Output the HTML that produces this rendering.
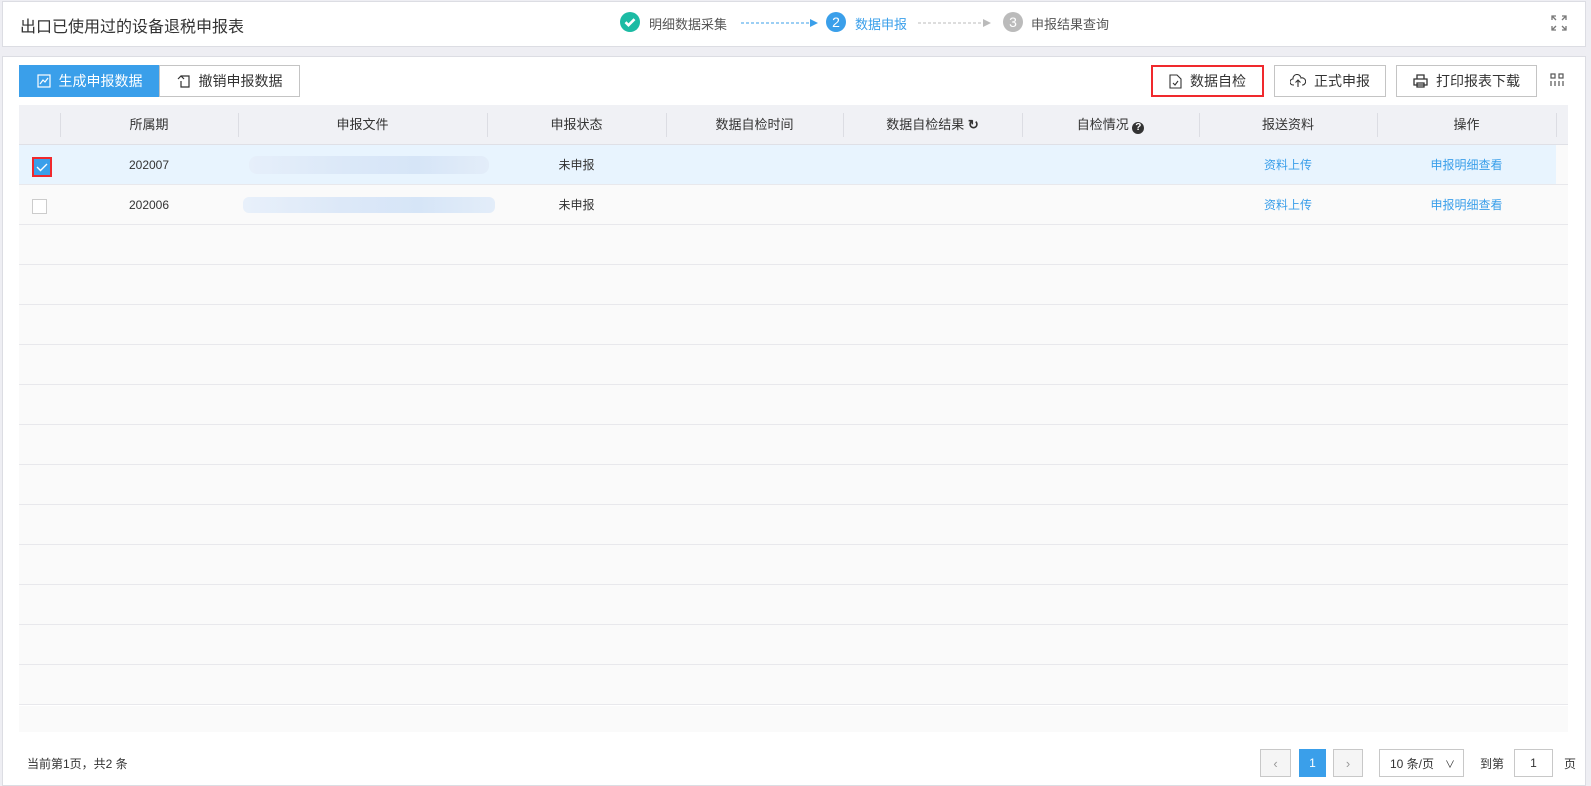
<!DOCTYPE html>
<html><head><meta charset="utf-8"><style>
*{box-sizing:border-box;margin:0;padding:0}
body{width:1591px;height:781px;background:#eeeef3;font-family:"Liberation Sans","Noto Sans CJK SC",sans-serif;color:#333;position:relative;overflow:hidden;font-size:13px}
.a{position:absolute}
.card{position:absolute;background:#fff;border:1px solid #dcdde3}
.btn{position:absolute;height:32px;border:1px solid #c4c4c4;background:#fff;font-size:14px;display:flex;align-items:center;justify-content:center;gap:8px;color:#333}
.th{position:absolute;top:105px;height:40px;line-height:40px;text-align:center;font-size:13px;color:#333}
.sep{position:absolute;top:113px;width:1px;height:24px;background:#dcdde3}
.row{position:absolute;left:19px;width:1549px;height:40px;border-bottom:1px solid #e8e8ec;background:#fafafa}
.c{position:absolute;line-height:40px;text-align:center;font-size:12px}
.lnk{color:#3a9fea}
.pg{position:absolute;top:749px;height:28px;border:1px solid #c8c8c8;background:#f5f5f5;display:flex;align-items:center;justify-content:center;color:#999;font-size:13px}
</style></head><body>
<div class="card" style="left:2px;top:1px;width:1584px;height:46px"></div>
<div class="a" style="left:20px;top:13px;font-size:16px;color:#333">出口已使用过的设备退税申报表</div>
<!-- steps -->
<svg class="a" style="left:620px;top:12px" width="20" height="20"><circle cx="10" cy="10" r="10" fill="#1cbba4"/><path d="M5.5 10.2l3 3 6-6" stroke="#fff" stroke-width="2.6" fill="none"/></svg>
<div class="a" style="left:649px;top:14px;font-size:13px;color:#555">明细数据采集</div>
<svg class="a" style="left:740px;top:18px" width="80" height="10"><line x1="1" y1="5" x2="70" y2="5" stroke="#3a9fea" stroke-dasharray="3,2"/><path d="M70 1l8 4-8 4z" fill="#3a9fea"/></svg>
<div class="a" style="left:826px;top:12px;width:20px;height:20px;border-radius:50%;background:#3a9fea;color:#fff;text-align:center;line-height:20px;font-size:14px">2</div>
<div class="a" style="left:855px;top:14px;font-size:13px;color:#3a9fea">数据申报</div>
<svg class="a" style="left:917px;top:18px" width="80" height="10"><line x1="1" y1="5" x2="66" y2="5" stroke="#bbb" stroke-dasharray="3,2"/><path d="M66 1l8 4-8 4z" fill="#bbb"/></svg>
<div class="a" style="left:1003px;top:12px;width:20px;height:20px;border-radius:50%;background:#bbb;color:#fff;text-align:center;line-height:20px;font-size:14px">3</div>
<div class="a" style="left:1031px;top:14px;font-size:13px;color:#555">申报结果查询</div>
<svg class="a" style="left:1550px;top:14px" width="18" height="18" fill="none" stroke="#777" stroke-width="1.3"><path d="M2 6V2h4M2 2l4 4M16 6V2h-4M16 2l-4 4M2 12v4h4M2 16l4-4M16 12v4h-4M16 16l-4-4"/></svg>

<div class="card" style="left:2px;top:56px;width:1584px;height:730px"></div>
<!-- left buttons -->
<div class="btn" style="left:19px;top:65px;width:141px;background:#3a9fea;border-color:#3a9fea;color:#fff"><svg width="14" height="14" fill="none" stroke="#fff" stroke-width="1.2"><rect x="1" y="1" width="12" height="12"/><path d="M3 10l3-4 2 2 3-4"/></svg>生成申报数据</div>
<div class="btn" style="left:159px;top:65px;width:141px"><svg width="14" height="14" fill="none" stroke="#333" stroke-width="1.2"><path d="M4 2h8v11H4V7M1 5l3-3 3 3"/></svg>撤销申报数据</div>
<!-- right buttons -->
<div class="btn" style="left:1151px;top:65px;width:113px;border:2px solid #f0292d"><svg width="13" height="15" fill="none" stroke="#333" stroke-width="1.1"><path d="M1 1h7l4 4v9H1z"/><path d="M4 9l2 2 3-4"/></svg>数据自检</div>
<div class="btn" style="left:1274px;top:65px;width:112px"><svg width="16" height="14" fill="none" stroke="#333" stroke-width="1.1"><path d="M4 11H3a3 3 0 010-6 4 4 0 018-1 3 3 0 012 7h-1M8 13V6M5.5 8.5L8 6l2.5 2.5"/></svg>正式申报</div>
<div class="btn" style="left:1396px;top:65px;width:141px"><svg width="15" height="14" fill="none" stroke="#333" stroke-width="1.3"><path d="M4 5V1h7v4M1 5h13v6H1zM4 9h7v4H4z"/></svg>打印报表下载</div>
<svg class="a" style="left:1550px;top:73px" width="14" height="14" fill="none" stroke="#555" stroke-width="1.2"><rect x="1" y="1" width="4" height="4"/><rect x="9" y="1" width="4" height="4"/><path d="M1 8v5M5 8v5M9 8v5M13 8v5"/></svg>

<!-- table -->
<div class="a" style="left:19px;top:105px;width:1549px;height:40px;background:#f0f1f5;border-bottom:1px solid #dfe0e6"></div>
<div class="sep" style="left:60px"></div><div class="sep" style="left:238px"></div><div class="sep" style="left:487px"></div><div class="sep" style="left:666px"></div><div class="sep" style="left:843px"></div><div class="sep" style="left:1022px"></div><div class="sep" style="left:1199px"></div><div class="sep" style="left:1377px"></div><div class="sep" style="left:1556px"></div>
<div class="th" style="left:60px;width:178px">所属期</div>
<div class="th" style="left:238px;width:249px">申报文件</div>
<div class="th" style="left:487px;width:179px">申报状态</div>
<div class="th" style="left:666px;width:177px">数据自检时间</div>
<div class="th" style="left:843px;width:179px">数据自检结果 <span style="font-weight:bold">&#x21BB;</span></div>
<div class="th" style="left:1022px;width:177px">自检情况 <span style="display:inline-block;width:12px;height:12px;border-radius:50%;background:#333;color:#fff;font-size:10px;line-height:12px;font-weight:bold;vertical-align:-1px">?</span></div>
<div class="th" style="left:1199px;width:178px">报送资料</div>
<div class="th" style="left:1377px;width:179px">操作</div>

<div class="row" style="top:145px;background:#fafafa"><div class="a" style="left:0;top:0;width:1537px;height:39px;background:#e8f4fe"></div></div>
<div class="row" style="top:185px"></div>
<div class="row" style="top:225px"></div><div class="row" style="top:265px"></div><div class="row" style="top:305px"></div><div class="row" style="top:345px"></div><div class="row" style="top:385px"></div><div class="row" style="top:425px"></div><div class="row" style="top:465px"></div><div class="row" style="top:505px"></div><div class="row" style="top:545px"></div><div class="row" style="top:585px"></div><div class="row" style="top:625px"></div><div class="row" style="top:665px"></div>
<div class="a" style="left:19px;top:706px;width:1549px;height:26px;background:#fafafa"></div>

<!-- row 1 -->
<div class="a" style="left:32px;top:157px;width:20px;height:20px;border:2px solid #f0292d;background:#3a9fea"></div>
<svg class="a" style="left:35px;top:160px" width="14" height="14"><path d="M2 7l3.5 3.5L12 4" stroke="#fff" stroke-width="1.4" fill="none"/></svg>
<div class="c" style="left:60px;top:145px;width:178px">202007</div>
<div class="a" style="left:249px;top:156px;width:240px;height:18px;border-radius:8px;background:linear-gradient(90deg,#e6effa,#dbe8f8 40%,#d6e5f7 70%,#e3edf9)"></div>
<div class="c" style="left:487px;top:145px;width:179px">未申报</div>
<div class="c lnk" style="left:1199px;top:145px;width:178px">资料上传</div>
<div class="c lnk" style="left:1377px;top:145px;width:179px">申报明细查看</div>
<!-- row 2 -->
<div class="a" style="left:32px;top:199px;width:15px;height:15px;border:1px solid #ccc;background:#fff"></div>
<div class="c" style="left:60px;top:185px;width:178px">202006</div>
<div class="a" style="left:243px;top:197px;width:252px;height:16px;border-radius:6px;background:linear-gradient(90deg,#e8f0fa,#dce8f8 40%,#d6e5f7 70%,#e3edf9)"></div>
<div class="c" style="left:487px;top:185px;width:179px">未申报</div>
<div class="c lnk" style="left:1199px;top:185px;width:178px">资料上传</div>
<div class="c lnk" style="left:1377px;top:185px;width:179px">申报明细查看</div>

<!-- footer -->
<div class="a" style="left:27px;top:755px;font-size:12px">当前第1页，共2 条</div>
<div class="pg" style="left:1260px;width:31px">&#x2039;</div>
<div class="pg" style="left:1299px;width:27px;background:#3a9fea;border-color:#3a9fea;color:#fff;font-size:12px">1</div>
<div class="pg" style="left:1333px;width:30px">&#x203A;</div>
<div class="pg" style="left:1379px;width:85px;background:#fff;color:#333;font-size:12px;justify-content:space-between;padding:0 8px 0 10px">10 条/页<span style="font-size:10px">&#x2228;</span></div>
<div class="a" style="left:1480px;top:755px;font-size:12px">到第</div>
<div class="pg" style="left:1514px;width:39px;background:#fff;color:#333;font-size:12px">1</div>
<div class="a" style="left:1564px;top:755px;font-size:12px">页</div>
</body></html>
